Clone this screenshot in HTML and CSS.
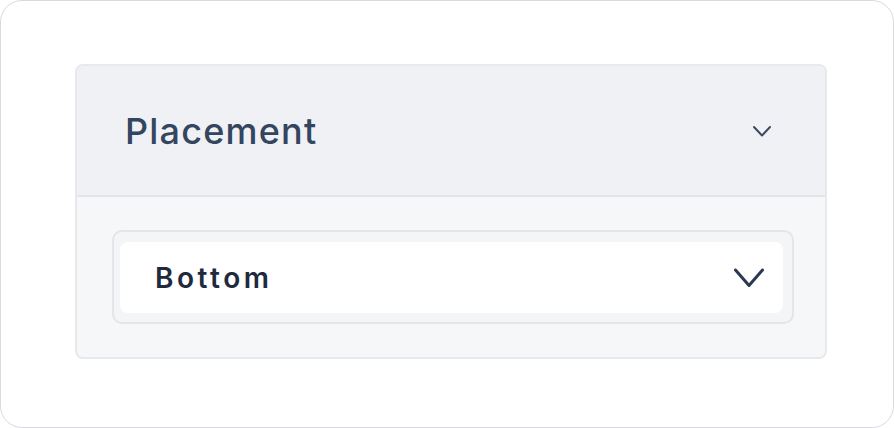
FILE: index.html
```html
<!DOCTYPE html>
<html>
<head>
<meta charset="utf-8">
<link rel="stylesheet" href="styles.css">
</head>
<body>
<div class="frame">
  <div class="card">
    <div class="card-header">
      <span class="title">Placement</span>
      <svg class="chev-sm" width="20" height="13" viewBox="0 0 20 13"><path d="M2 2 L10 10.5 L18 2" fill="none" stroke="#3a4a63" stroke-width="2" stroke-linecap="round" stroke-linejoin="round"/></svg>
    </div>
    <div class="card-body">
      <div class="select">
        <div class="select-inner">
          <span class="value">Bottom</span>
          <svg class="chev" width="32" height="22" viewBox="0 0 32 22"><path d="M2.5 3 L16 18.5 L29.5 3" fill="none" stroke="#2b3a52" stroke-width="3" stroke-linecap="round" stroke-linejoin="round"/></svg>
        </div>
      </div>
    </div>
  </div>
</div>
</body>
</html>
```

FILE: styles.css
```css
html, body {
  margin: 0;
  padding: 0;
  background: #ffffff;
}
body {
  font-family: Inter, "Noto Sans", sans-serif;
}
.frame {
  box-sizing: border-box;
  width: 894px;
  height: 428px;
  border: 1.5px solid #d8dadf;
  border-radius: 22px;
  background: #ffffff;
  padding: 63px 0 0 74px;
}
.card {
  box-sizing: border-box;
  width: 752px;
  height: 295px;
  border: 2px solid #e7e9ec;
  border-radius: 8px;
  overflow: hidden;
  display: flex;
  flex-direction: column;
  background: #f6f7f9;
}
.card-header {
  box-sizing: border-box;
  height: 131px;
  background: #eff1f4;
  border-bottom: 2px solid #e3e5e9;
  display: flex;
  align-items: center;
  justify-content: space-between;
  padding: 0 53px 0 48px;
}
.title {
  font-size: 36px;
  font-weight: 500;
  color: #34455f;
  letter-spacing: 1.2px;
  line-height: 1;
}
.chev-sm {
  display: block;
  margin-top: 2px;
}
.card-body {
  flex: 1;
  padding: 33px 33px 0 35px;
}
.select {
  box-sizing: border-box;
  width: 682px;
  height: 94px;
  border: 2px solid #e3e5e9;
  border-radius: 10px;
  background: #f4f5f7;
  padding: 10px 9px 9px 6px;
}
.select-inner {
  height: 100%;
  background: #ffffff;
  border-radius: 8px;
  display: flex;
  align-items: center;
  justify-content: space-between;
  padding: 0 18px 0 35px;
}
.value {
  font-size: 28px;
  font-weight: 600;
  color: #1f2a3d;
  letter-spacing: 3.5px;
  line-height: 1;
}
.chev {
  display: block;
}
```
